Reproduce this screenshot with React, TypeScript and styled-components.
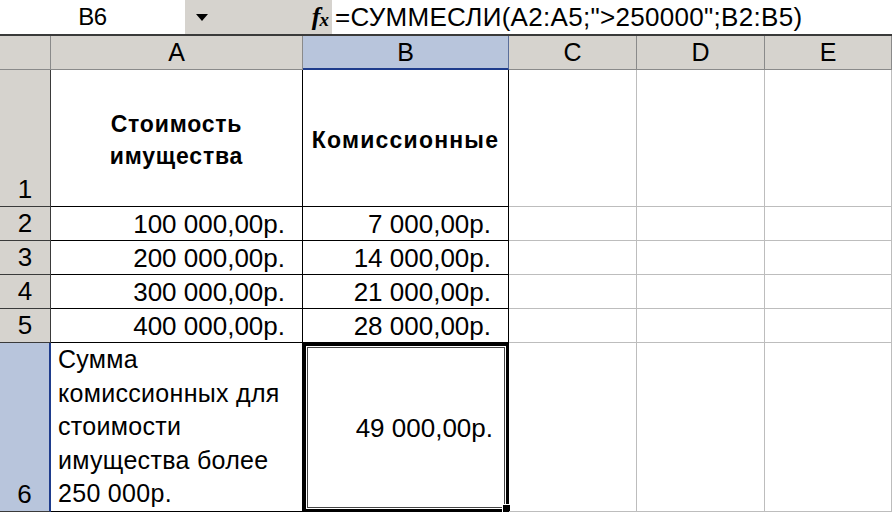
import React from "react"
import styled, { createGlobalStyle } from "styled-components"

const GlobalStyle = createGlobalStyle`
  html, body {
    margin: 0;
    padding: 0;
    background: #ffffff;
  }
  body {
    width: 892px;
    height: 512px;
    overflow: hidden;
    font-family: "Liberation Sans", Arial, sans-serif;
    color: #000;
  }
`

const HEADER_GRAY = "#d6d3ce"
const HILITE = "#b8c5dc"

const Page = styled.div`
  width: 892px;
  height: 512px;
  display: flex;
  flex-direction: column;
`

const FormulaBar = styled.div`
  height: 34px;
  display: flex;
  border-bottom: 2px solid #3a3a3a;
  background: #fff;
`

const NameBox = styled.div`
  width: 185px;
  display: flex;
  align-items: center;
  justify-content: center;
  font-size: 24px;
  letter-spacing: -0.5px;
`

const ToolArea = styled.div`
  width: 147px;
  background: ${HEADER_GRAY};
  display: flex;
  align-items: center;
  justify-content: space-between;
  padding: 0 4px 0 11px;
  box-sizing: border-box;
`

const DropArrow = styled.div`
  width: 0;
  height: 0;
  border-left: 6px solid transparent;
  border-right: 6px solid transparent;
  border-top: 7px solid #000;
`

const FxMark = styled.span`
  font-family: "Liberation Serif", "Times New Roman", serif;
  font-style: italic;
  font-weight: bold;
  font-size: 26px;
  letter-spacing: -1px;

  sub {
    font-size: 19px;
    vertical-align: -1px;
  }
`

const FormulaText = styled.div`
  flex: 1;
  display: flex;
  align-items: center;
  padding-left: 3px;
  font-size: 26px;
  letter-spacing: 0.3px;
  white-space: nowrap;
`

const Sheet = styled.div`
  display: grid;
  grid-template-columns: 51px 252px 206px 128px 128px 127px;
  grid-template-rows: 34px 137px 34px 34px 34px 34px 169px;
`

const Corner = styled.div`
  background: ${HEADER_GRAY};
  border-right: 1px solid #8a8a8a;
  border-bottom: 1px solid #8a8a8a;
`

const ColHeader = styled.div<{ $active?: boolean }>`
  background: ${(p) => (p.$active ? HILITE : HEADER_GRAY)};
  border-right: 1px solid ${(p) => (p.$active ? "#5a6e9a" : "#8a8a8a")};
  border-bottom: ${(p) => (p.$active ? "2px solid #1e3c8c" : "1px solid #8a8a8a")};
  display: flex;
  align-items: center;
  justify-content: center;
  font-size: 25px;
  box-sizing: border-box;
`

const RowHeader = styled.div<{ $active?: boolean }>`
  background: ${(p) => (p.$active ? HILITE : HEADER_GRAY)};
  border-right: ${(p) => (p.$active ? "2px solid #1e3c8c" : "1px solid #3a3a3a")};
  border-bottom: 1px solid #3a3a3a;
  display: flex;
  align-items: flex-end;
  justify-content: center;
  font-size: 26px;
  line-height: 34px;
  box-sizing: border-box;
`

const Cell = styled.div<{
  $framed?: boolean
  $align?: "left" | "center" | "right"
  $valign?: "start" | "center"
}>`
  position: relative;
  box-sizing: border-box;
  border-right: 1px solid ${(p) => (p.$framed ? "#000" : "#bdbdbd")};
  border-bottom: 1px solid ${(p) => (p.$framed ? "#000" : "#bdbdbd")};
  display: flex;
  align-items: ${(p) => (p.$valign === "start" ? "flex-start" : "center")};
  justify-content: ${(p) =>
    p.$align === "right" ? "flex-end" : p.$align === "center" ? "center" : "flex-start"};
  text-align: ${(p) => p.$align ?? "left"};
  font-size: 26px;
  white-space: pre-line;
`

const TitleText = styled.div<{ $spacing?: number }>`
  font-size: 23px;
  font-weight: bold;
  letter-spacing: ${(p) => p.$spacing ?? 1}px;
  line-height: 32px;
  padding-top: 4px;
`

const Amount = styled.span<{ $inset?: number }>`
  padding-right: ${(p) => p.$inset ?? 17}px;
  line-height: 34px;
`

const NoteText = styled.div`
  padding: 0 0 0 7px;
  font-size: 25px;
  line-height: 33.5px;
  letter-spacing: 0.3px;
`

const SelectedCell = styled(Cell)`
  border: 3px solid #000;
  box-shadow: inset 0 0 0 1px #fff, inset 0 0 0 2px #444;
`

const FillHandle = styled.div`
  position: absolute;
  right: -5px;
  bottom: -4px;
  width: 7px;
  height: 7px;
  background: #000;
  border: 1px solid #fff;
`

const columns = ["A", "B", "C", "D", "E"]

const rows = [
  { a: "100 000,00р.", b: "7 000,00р." },
  { a: "200 000,00р.", b: "14 000,00р." },
  { a: "300 000,00р.", b: "21 000,00р." },
  { a: "400 000,00р.", b: "28 000,00р." },
]

const EmptyCells = () => (
  <>
    <Cell />
    <Cell />
    <Cell />
  </>
)

const App = () => {
  return (
    <Page>
      <GlobalStyle />
      <FormulaBar>
        <NameBox>B6</NameBox>
        <ToolArea>
          <DropArrow />
          <FxMark>
            f<sub>x</sub>
          </FxMark>
        </ToolArea>
        <FormulaText>=СУММЕСЛИ(A2:A5;"&gt;250000";B2:B5)</FormulaText>
      </FormulaBar>

      <Sheet>
        <Corner />
        {columns.map((c) => (
          <ColHeader key={c} $active={c === "B"}>
            {c}
          </ColHeader>
        ))}

        <RowHeader>1</RowHeader>
        <Cell $framed $align="center">
          <TitleText $spacing={0.8}>{"Стоимость\nимущества"}</TitleText>
        </Cell>
        <Cell $framed $align="center">
          <TitleText $spacing={1.2}>Комиссионные</TitleText>
        </Cell>
        <EmptyCells />

        {rows.map((r, i) => (
          <React.Fragment key={r.a}>
            <RowHeader>{i + 2}</RowHeader>
            <Cell $framed $align="right">
              <Amount>{r.a}</Amount>
            </Cell>
            <Cell $framed $align="right">
              <Amount>{r.b}</Amount>
            </Cell>
            <EmptyCells />
          </React.Fragment>
        ))}

        <RowHeader $active>6</RowHeader>
        <Cell $framed $valign="start">
          <NoteText>
            {"Сумма\nкомиссионных для\nстоимости\nимущества более\n250 000р."}
          </NoteText>
        </Cell>
        <SelectedCell $align="right">
          <Amount $inset={13}>49 000,00р.</Amount>
          <FillHandle />
        </SelectedCell>
        <EmptyCells />
      </Sheet>
    </Page>
  )
}

export default App
